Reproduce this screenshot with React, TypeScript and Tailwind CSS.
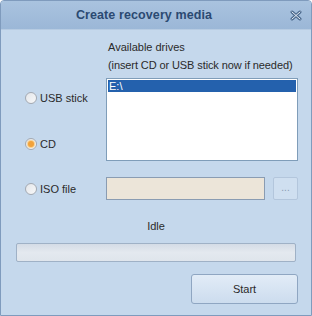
import React from 'react';

const FONT = { fontFamily: '"Liberation Sans", Arial, sans-serif' };

function Radio({ checked, label }: { checked?: boolean; label: string }) {
  return (
    <label className="flex items-center gap-[3px] text-[11px] leading-[14px] text-[#2a2a2a]">
      <span className="w-[12px] h-[12px] rounded-full border border-[#a3a9b2] bg-gradient-to-br from-[#e4e6ea] to-[#f7f8f9] flex items-center justify-center">
        {checked && <span className="w-[6px] h-[6px] rounded-full bg-[#f2a23a] shadow-[0_0_1px_1px_#f8cf8a]" />}
      </span>
      {label}
    </label>
  );
}

export default function App() {
  return (
    <div className="w-[312px] h-[316px] bg-[#c5d8ec] border border-[#7f9bbd] rounded-t-[4px] flex flex-col overflow-hidden" style={FONT}>
      {/* title bar */}
      <div className="h-[29px] shrink-0 bg-gradient-to-b from-[#a9c3df] to-[#9bb7d7] border-b border-[#b6cbe2] relative flex items-center justify-center pr-[24px]">
        <span className="text-[12.5px] font-bold text-[#2b4a72] tracking-[0.1px]">Create recovery media</span>
        <svg className="absolute right-[9px] top-[9px]" width="12" height="11" viewBox="0 0 12 11">
          <path d="M2 2 L10 9 M10 2 L2 9" stroke="#4c6a8e" strokeWidth="3" strokeLinecap="round" />
          <path d="M2 2 L10 9 M10 2 L2 9" stroke="#e8eef6" strokeWidth="1" strokeLinecap="round" />
        </svg>
      </div>

      {/* drives */}
      <div className="flex pt-[8px] pr-[13px]">
        <div className="w-[105px] shrink-0 flex flex-col pl-[24px] pt-[53px] gap-[32px]">
          <Radio label="USB stick" />
          <Radio checked label="CD" />
        </div>
        <div className="flex-1 flex flex-col">
          <div className="text-[11px] leading-[18px] text-[#2a2a2a] pl-[2px]">Available drives</div>
          <div className="text-[11px] leading-[18px] text-[#2a2a2a] pl-[2px] tracking-[-0.1px]">(insert CD or USB stick now if needed)</div>
          <div className="mt-[4px] h-[83px] bg-white border border-[#7f9db9] p-[1px]">
            <div className="h-[12px] bg-[#2461ad] text-white text-[11px] leading-[12px] pl-[1px]">E:\</div>
          </div>
        </div>
      </div>

      {/* iso */}
      <div className="flex items-center mt-[16px] pr-[13px]">
        <div className="w-[105px] shrink-0 pl-[24px]">
          <Radio label="ISO file" />
        </div>
        <div className="flex-1 h-[23px] bg-[#ece5d9] border border-[#8a9cb2]" />
        <button className="ml-[8px] w-[25px] h-[23px] bg-[#cfdff0] border border-[#b3c6dc] rounded-[2px] text-[#8a9bb0] text-[10px] leading-none pb-[2px]">...</button>
      </div>

      <div className="mt-[19px] text-center text-[11px] leading-[14px] text-[#2a2a2a]">Idle</div>

      {/* progress */}
      <div className="mx-[15px] mt-[10px] h-[19px] rounded-[2px] border border-[#9fb1c6] bg-gradient-to-b from-[#d4dce6] via-[#e4e9ef] to-[#dfe5ec]" />

      <div className="flex justify-end pr-[13px] mt-[12px]">
        <button className="w-[107px] h-[30px] rounded-[3px] border border-[#8fa6c2] bg-gradient-to-b from-[#e2ecf7] to-[#ccdcee] text-[11px] text-[#2a2a2a]">Start</button>
      </div>
    </div>
  );
}
